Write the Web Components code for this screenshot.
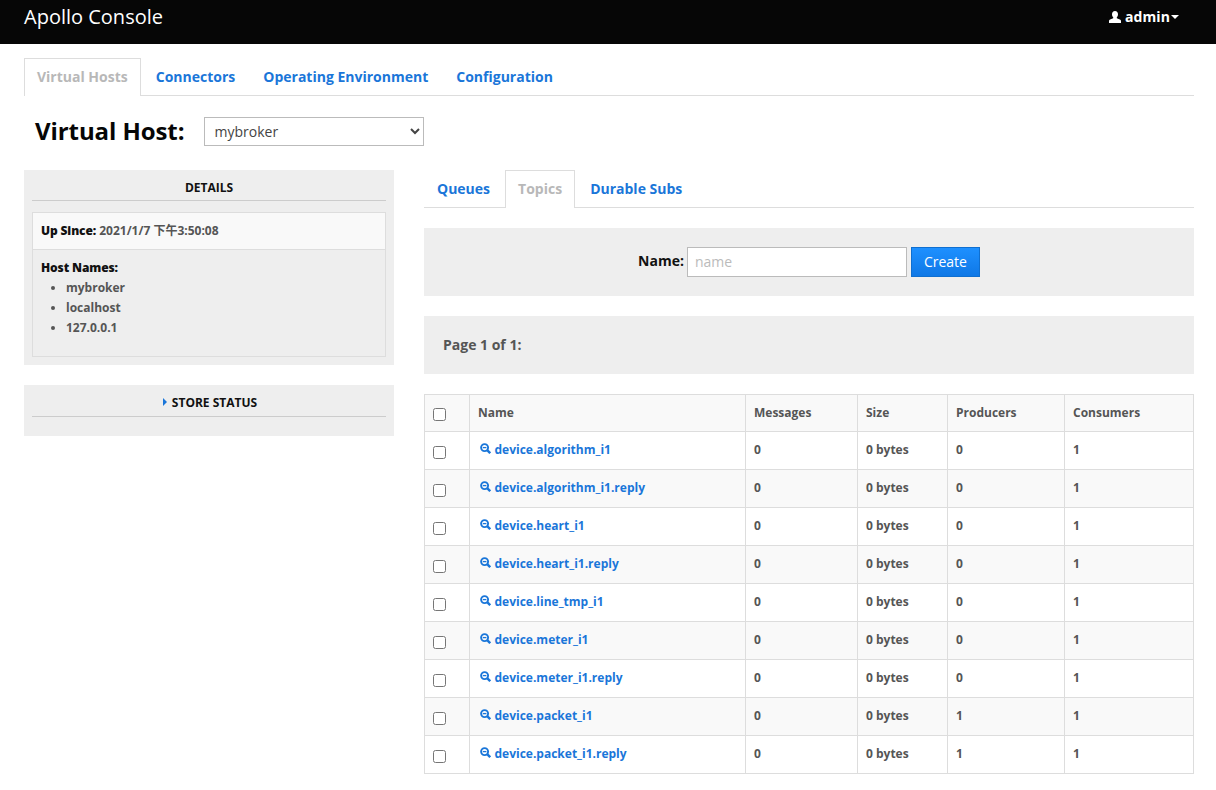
<!DOCTYPE html>
<html>
<head>
<meta charset="utf-8">
<title>Apollo Console</title>
<style>
  html, body { margin: 0; padding: 0; background: #fff; }
  body {
    font-family: "Open Sans", "Noto Sans CJK SC", sans-serif;
    font-size: 12px;
    color: #000;
  }
</style>
</head>
<body>
<apollo-navbar brand="Apollo Console" user="admin"></apollo-navbar>
<apollo-page>
  <apollo-tabs active="Virtual Hosts" items="Virtual Hosts|Connectors|Operating Environment|Configuration"></apollo-tabs>
  <host-select></host-select>
  <two-columns>
    <div slot="left">
      <details-panel></details-panel>
      <store-panel></store-panel>
    </div>
    <div slot="right">
      <apollo-tabs active="Topics" items="Queues|Topics|Durable Subs"></apollo-tabs>
      <create-form></create-form>
      <page-bar>Page 1 of 1:</page-bar>
      <topic-table></topic-table>
    </div>
  </two-columns>
</apollo-page>
<script>
class ApolloNavbar extends HTMLElement {
  constructor() {
    super();
    this.attachShadow({ mode: "open" });
    this.shadowRoot.innerHTML = `
      <style>
        :host { display: flex; justify-content: space-between; height: 44px; padding: 0 37px 0 24px; background: #060606; color: #fff; }
        .brand { font-size: 20px; line-height: 34px; }
        .user { display: flex; align-items: center; gap: 4px; height: 33px; font-size: 14px; font-weight: 700; letter-spacing: 0.1px; }
        .user svg { display: block; }
        .caret { width: 0; height: 0; margin-left: -3px; border: 4px solid transparent; border-top-color: #fff; border-bottom: 0; }
      </style>
      <div class="brand">${this.getAttribute("brand")}</div>
      <div class="user">
        <svg width="12" height="12" viewBox="0 0 12 12"><path fill="#fff" d="M6 0c1.900 0 3 1.400 3 3.300 0 1.300-.5 2.400-1.200 3v.9l3.100 1.200c.7.3 1.100.8 1.100 1.500V12H0V9.900c0-.7.4-1.200 1.100-1.500l3.100-1.200v-.9c-.7-.6-1.200-1.700-1.200-3C3 1.400 4.100 0 6 0z"/></svg>
        <span>${this.getAttribute("user")}</span>
        <span class="caret"></span>
      </div>`;
  }
}

class ApolloPage extends HTMLElement {
  constructor() {
    super();
    this.attachShadow({ mode: "open" });
    this.shadowRoot.innerHTML = `
      <style>:host { display: block; padding: 14px 22px 0 24px; }</style>
      <slot></slot>`;
  }
}

class ApolloTabs extends HTMLElement {
  connectedCallback() {
    if (this.shadowRoot) return;
    this.attachShadow({ mode: "open" });
    const links = this.getAttribute("items").split("|").map((name) => {
      const cls = name === this.getAttribute("active") ? "tab active" : "tab";
      return `<a class="${cls}">${name}</a>`;
    }).join("");
    this.shadowRoot.innerHTML = `
      <style>
        :host { display: flex; gap: 2px; height: 37px; border-bottom: 1px solid #ddd; }
        .tab { display: block; height: 37px; padding: 0 12px; box-sizing: border-box; border: 1px solid transparent; border-bottom: 0; font-size: 14px; font-weight: 700; line-height: 36px; color: #1a76d9; }
        .active { height: 38px; background: #fff; border-color: #ddd; color: #b8b8b8; }
      </style>
      ${links}`;
  }
}

class HostSelect extends HTMLElement {
  constructor() {
    super();
    this.attachShadow({ mode: "open" });
    this.shadowRoot.innerHTML = `
      <style>
        :host { display: flex; align-items: center; height: 29px; margin: 21px 0 24px; padding-left: 11px; }
        h2 { width: 169px; margin: -2px 0 0; font-size: 24px; font-weight: 700; letter-spacing: -0.08px; color: #060606; }
        select { width: 220px; height: 29px; padding: 0 5.5px; box-sizing: border-box; background: #fff; border: 1px solid #bbb; border-radius: 0; font: 14px "Open Sans", sans-serif; color: #444; }
      </style>
      <h2>Virtual Host:</h2>
      <select><option>mybroker</option></select>`;
  }
}

class TwoColumns extends HTMLElement {
  constructor() {
    super();
    this.attachShadow({ mode: "open" });
    this.shadowRoot.innerHTML = `
      <style>:host { display: grid; grid-template-columns: 370px 770px; gap: 30px; align-items: start; }</style>
      <slot name="left"></slot>
      <slot name="right"></slot>`;
  }
}

class DetailsPanel extends HTMLElement {
  constructor() {
    super();
    this.attachShadow({ mode: "open" });
    this.shadowRoot.innerHTML = `
      <style>
        :host { display: block; height: 195px; padding: 0 8px; box-sizing: border-box; background: #eee; }
        h3 { margin: 0 0 11px; height: 30px; border-bottom: 1px solid #ccc; font-size: 12px; font-weight: 700; line-height: 35px; text-align: center; color: #111; }
        .box { height: 145px; box-sizing: border-box; border: 1px solid #ddd; color: #555; font-weight: 700; }
        .since { height: 36px; padding-left: 8px; background: #f9f9f9; border-bottom: 1px solid #ddd; line-height: 35px; }
        b { letter-spacing: -0.12px; color: #111; }
        .names { padding: 8px 8px 0; line-height: 20px; }
        ul { margin: 0; padding-left: 25px; }
      </style>
      <h3>DETAILS</h3>
      <div class="box">
        <div class="since"><b>Up Since:</b> 2021/1/7 下午3:50:08</div>
        <div class="names">
          <b>Host Names:</b>
          <ul><li>mybroker</li><li>localhost</li><li>127.0.0.1</li></ul>
        </div>
      </div>`;
  }
}

class StorePanel extends HTMLElement {
  constructor() {
    super();
    this.attachShadow({ mode: "open" });
    this.shadowRoot.innerHTML = `
      <style>
        :host { display: block; height: 51px; margin-top: 20px; padding: 0 8px; box-sizing: border-box; background: #eee; }
        h3 { display: flex; justify-content: center; align-items: center; gap: 5px; margin: 0; padding: 3px 0 0 2px; height: 28px; border-bottom: 1px solid #ccc; font-size: 12px; font-weight: 700; color: #111; }
        i { width: 0; height: 0; border: 4px solid transparent; border-left-color: #1a76d9; border-right: 0; }
      </style>
      <h3><i></i>STORE STATUS</h3>`;
  }
}

class CreateForm extends HTMLElement {
  constructor() {
    super();
    this.attachShadow({ mode: "open" });
    this.shadowRoot.innerHTML = `
      <style>
        :host { display: flex; justify-content: center; align-items: center; gap: 3px; height: 68px; margin-top: 20px; background: #eee; }
        label { margin-top: -3px; font-size: 14px; font-weight: 700; color: #111; }
        input { width: 220px; height: 30px; padding: 0 7px 2px; box-sizing: border-box; background: #fff; border: 1px solid #bbb; font: 14px "Open Sans", sans-serif; }
        input::placeholder { color: #bbb; opacity: 1; }
        button { width: 69px; height: 30px; margin-left: 1px; padding: 0 0 2px; background: linear-gradient(#1e90ff, #0f78e6); border: 1px solid #0f6fd0; font: 14px "Open Sans", sans-serif; color: #fff; }
      </style>
      <label>Name:</label>
      <input placeholder="name">
      <button>Create</button>`;
  }
}

class PageBar extends HTMLElement {
  constructor() {
    super();
    this.attachShadow({ mode: "open" });
    this.shadowRoot.innerHTML = `
      <style>
        :host { display: flex; align-items: center; height: 56px; margin-top: 20px; padding: 0 0 2px 19px; background: #eee; font-size: 14px; font-weight: 700; color: #555; }
      </style>
      <slot></slot>`;
  }
}

const TOPICS = [
  ["device.algorithm_i1", 0],
  ["device.algorithm_i1.reply", 0],
  ["device.heart_i1", 0],
  ["device.heart_i1.reply", 0],
  ["device.line_tmp_i1", 0],
  ["device.meter_i1", 0],
  ["device.meter_i1.reply", 0],
  ["device.packet_i1", 1],
  ["device.packet_i1.reply", 1],
];

const LENS = `<svg width="11" height="11" viewBox="0 0 11 11" fill="none" stroke="#1a76d9"><circle cx="4.600" cy="4.600" r="3.500" stroke-width="1.900"/><path d="M7.200 7.200L10.200 10.200" stroke-width="2.400"/><path d="M2.800 4.600h3.600" stroke-width="1.300"/></svg>`;

class TopicTable extends HTMLElement {
  constructor() {
    super();
    this.attachShadow({ mode: "open" });
    const rows = TOPICS.map(([name, producers]) => `
      <tr>
        <td class="check"><input type="checkbox"></td>
        <td class="name"><a>${LENS}${name}</a></td>
        <td>0</td><td>0 bytes</td><td>${producers}</td><td>1</td>
      </tr>`).join("");
    this.shadowRoot.innerHTML = `
      <style>
        :host { display: block; margin-top: 20px; }
        table { width: 770px; table-layout: fixed; border-collapse: collapse; font-size: 12px; font-weight: 700; color: #555; }
        th, td { height: 38px; padding: 0 8px 2px; box-sizing: border-box; border: 1px solid #ddd; text-align: left; }
        th { height: 37px; background: #f9f9f9; font-weight: 700; }
        tr:nth-child(even) td { background: #f9f9f9; }
        td.check, th.check { padding: 0 0 0 8px; }
        input { display: block; width: 13px; height: 13px; margin: 3px 0 0; }
        .name { padding-left: 10px; }
        a { display: flex; align-items: center; gap: 3.500px; color: #1a76d9; }
        a svg { margin-top: -2px; }
      </style>
      <table>
        <colgroup><col width="45"><col width="276"><col width="112"><col width="90"><col width="117"><col width="129"></colgroup>
        <thead><tr>
          <th class="check"><input type="checkbox"></th>
          <th>Name</th><th>Messages</th><th>Size</th><th>Producers</th><th>Consumers</th>
        </tr></thead>
        <tbody>${rows}</tbody>
      </table>`;
  }
}

customElements.define("apollo-navbar", ApolloNavbar);
customElements.define("apollo-page", ApolloPage);
customElements.define("apollo-tabs", ApolloTabs);
customElements.define("host-select", HostSelect);
customElements.define("two-columns", TwoColumns);
customElements.define("details-panel", DetailsPanel);
customElements.define("store-panel", StorePanel);
customElements.define("create-form", CreateForm);
customElements.define("page-bar", PageBar);
customElements.define("topic-table", TopicTable);
</script>
</body>
</html>
